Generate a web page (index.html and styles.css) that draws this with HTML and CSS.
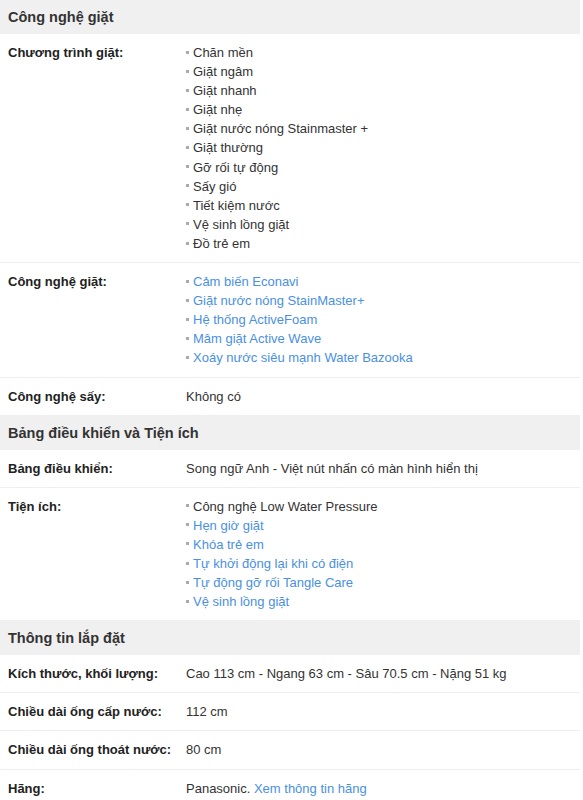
FILE: index.html
```html
<!DOCTYPE html>
<html lang="vi">
<head>
    <meta charset="UTF-8">
    <meta name="viewport" content="width=device-width, initial-scale=1.0">
    <title>Thông số kỹ thuật</title>
    <link rel="stylesheet" href="styles.css">
</head>
<body>

    <div class="specs">
        <h3 class="group">Công nghệ giặt</h3>
        <div class="row">
            <div class="label">Chương trình giặt:</div>
            <ul class="value list">
                <li>Chăn mền</li>
                <li>Giặt ngâm</li>
                <li>Giặt nhanh</li>
                <li>Giặt nhẹ</li>
                <li>Giặt nước nóng Stainmaster +</li>
                <li>Giặt thường</li>
                <li>Gỡ rối tự động</li>
                <li>Sấy gió</li>
                <li>Tiết kiệm nước</li>
                <li>Vệ sinh lồng giặt</li>
                <li>Đồ trẻ em</li>
            </ul>
        </div>
        <div class="row">
            <div class="label">Công nghệ giặt:</div>
            <ul class="value list">
                <li><a href="#">Cảm biến Econavi</a></li>
                <li><a href="#">Giặt nước nóng StainMaster+</a></li>
                <li><a href="#">Hệ thống ActiveFoam</a></li>
                <li><a href="#">Mâm giặt Active Wave</a></li>
                <li><a href="#">Xoáy nước siêu mạnh Water Bazooka</a></li>
            </ul>
        </div>
        <div class="row">
            <div class="label">Công nghệ sấy:</div>
            <div class="value">Không có</div>
        </div>

        <h3 class="group">Bảng điều khiển và Tiện ích</h3>
        <div class="row">
            <div class="label">Bảng điều khiển:</div>
            <div class="value">Song ngữ Anh - Việt nút nhấn có màn hình hiển thị</div>
        </div>
        <div class="row">
            <div class="label">Tiện ích:</div>
            <ul class="value list">
                <li>Công nghệ Low Water Pressure</li>
                <li><a href="#">Hẹn giờ giặt</a></li>
                <li><a href="#">Khóa trẻ em</a></li>
                <li><a href="#">Tự khởi động lại khi có điện</a></li>
                <li><a href="#">Tự động gỡ rối Tangle Care</a></li>
                <li><a href="#">Vệ sinh lồng giặt</a></li>
            </ul>
        </div>

        <h3 class="group">Thông tin lắp đặt</h3>
        <div class="row">
            <div class="label">Kích thước, khối lượng:</div>
            <div class="value">Cao 113 cm - Ngang 63 cm - Sâu 70.5 cm - Nặng 51 kg</div>
        </div>
        <div class="row">
            <div class="label">Chiều dài ống cấp nước:</div>
            <div class="value">112 cm</div>
        </div>
        <div class="row">
            <div class="label">Chiều dài ống thoát nước:</div>
            <div class="value">80 cm</div>
        </div>
        <div class="row">
            <div class="label">Hãng:</div>
            <div class="value">Panasonic. <a href="#">Xem thông tin hãng</a></div>
        </div>
    </div>

</body>
</html>
```

FILE: styles.css
```css
body {
    margin: 0;
    background: white;
    font-family: "Liberation Sans", Arial, sans-serif;
    font-size: 13px;
    color: #333;
}
.specs {
    width: 580px;
}
.group {
    margin: 0;
    padding: 8px 8px;
    height: 18px;
    line-height: 18px;
    background-color: #f0f0f0;
    font-size: 14.5px;
    font-weight: bold;
    color: #333;
}
.row {
    display: grid;
    grid-template-columns: 186px 1fr;
    padding: 9px 0;
    line-height: 19.1px;
    border-bottom: 1px solid #eee;
}
.row:last-child {
    border-bottom: none;
}
.label {
    padding-left: 8px;
    font-weight: bold;
    color: #222;
}
.value {
    color: #333;
}
.list {
    margin: 0;
    padding: 0;
    list-style: none;
}
.list li::before {
    content: "";
    display: inline-block;
    width: 3px;
    height: 3px;
    margin: 0 4px 3px 0;
    vertical-align: middle;
    background-color: #aaa;
}
a {
    color: #4a90e2;
    text-decoration: none;
}
```
